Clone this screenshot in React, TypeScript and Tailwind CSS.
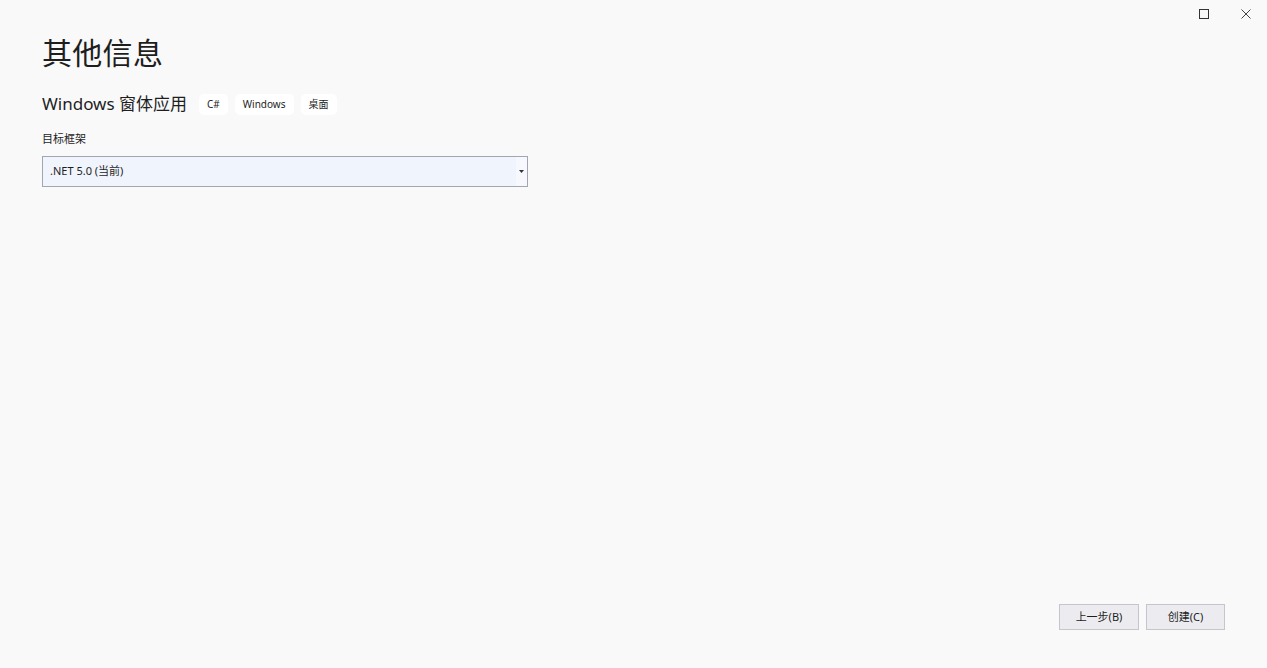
const font = {
  fontFamily: '"Noto Sans", "Noto Sans CJK SC", sans-serif',
};

function Tag({ label }: { label: string }) {
  return (
    <span className="flex h-[21px] items-center rounded-[5px] bg-white px-[8px] text-[10px] leading-none text-[#1e1e1e]">
      {label}
    </span>
  );
}

export default function App() {
  return (
    <div
      className="relative flex h-[668px] w-[1267px] flex-col bg-[#f9f9fa] text-[#1e1e1e]"
      style={font}
    >
      <div className="absolute right-[14px] top-[7px] flex items-center gap-[28px]">
        <svg width="14" height="14" viewBox="0 0 14 14" aria-hidden>
          <rect x="2.5" y="2.5" width="9" height="9" fill="none" stroke="#333" strokeWidth="1" />
        </svg>
        <svg width="14" height="14" viewBox="0 0 14 14" aria-hidden>
          <path d="M2.5 2.5l9 9M11.5 2.5l-9 9" stroke="#444" strokeWidth="1" />
        </svg>
      </div>

      <div className="flex flex-1 flex-col pl-[42px] pt-[33px]">
        <h1 className="text-[30px] font-normal leading-[40px] tracking-[0.3px]">其他信息</h1>
        <div className="mt-[20px] flex items-center">
          <span className="text-[17px] leading-[22px]">Windows 窗体应用</span>
          <div className="ml-[12px] flex gap-[7px]">
            <Tag label="C#" />
            <Tag label="Windows" />
            <Tag label="桌面" />
          </div>
        </div>
        <p className="mt-[17px] text-[11px] leading-[14px]">目标框架</p>
        <div className="mt-[10px] flex h-[31px] w-[486px] items-stretch border border-[#a3a6b0] bg-[#f0f4fd]">
          <span className="flex flex-1 items-center pl-[7px] text-[11px]">.NET 5.0 (当前)</span>
          <span className="flex w-[11px] items-center justify-center bg-[#f6f8fd]">
            <svg width="5" height="3" viewBox="0 0 5 3" aria-hidden>
              <path d="M0 0h5L2.5 3z" fill="#333" />
            </svg>
          </span>
        </div>
      </div>

      <div className="flex justify-end gap-[7px] pb-[38px] pr-[42px]">
        <button className="h-[26px] w-[80px] border border-[#c5c5cc] bg-[#ececf0] text-[11px]">
          上一步(B)
        </button>
        <button className="h-[26px] w-[79px] border border-[#c5c5cc] bg-[#ececf0] text-[11px]">
          创建(C)
        </button>
      </div>
    </div>
  );
}
